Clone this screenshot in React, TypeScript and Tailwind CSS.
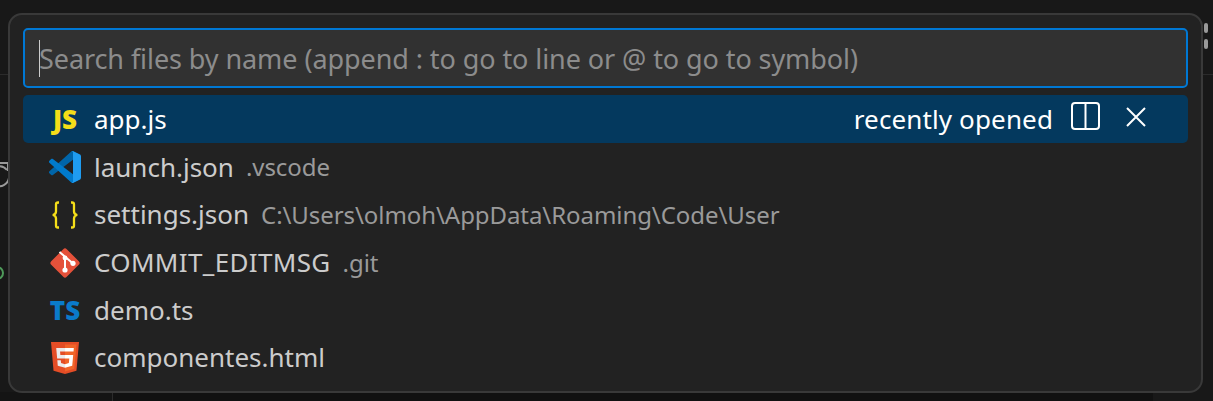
import type { ReactNode } from 'react';

function VsCodeIcon() {
  return (
    <svg viewBox="0 0 100 100" className="w-[32px] h-[32px]">
      <path fill="#0065a9" d="M96.46 10.8L75.86.9C73.47-.25 70.62.24 68.75 2.11L1.3 63.58C-.51 65.23-.51 68.08 1.31 69.73L6.82 74.74C8.3 76.09 10.53 76.19 12.13 74.98L93.36 13.36C96.08 11.29 100 13.23 100 16.65V16.41C100 14 98.62 11.82 96.46 10.8Z" />
      <path fill="#007acc" d="M96.46 89.2L75.86 99.12C73.47 100.26 70.62 99.78 68.75 97.9L1.3 36.42C-.51 34.77-.51 31.92 1.31 30.27L6.82 25.26C8.3 23.91 10.53 23.81 12.13 25.02L93.36 86.64C96.08 88.71 100 86.77 100 83.35V83.59C100 86 98.62 88.18 96.46 89.2Z" />
      <path fill="#1f9cf0" d="M75.86 99.13C73.46 100.27 70.61 99.78 68.74 97.91C71.04 100.21 75 98.58 75 95.3V4.7C75 1.42 71.04-.21 68.74 2.09C70.61.22 73.46-.27 75.86.87L96.46 10.77C98.62 11.81 100 14 100 16.41V83.59C100 86 98.62 88.19 96.46 89.23L75.86 99.13Z" />
    </svg>
  );
}

function Html5Icon() {
  return (
    <svg viewBox="30 0 451 512" className="w-[28px] h-[32px]">
      <path fill="#e44d26" d="M71 460L30 0h451l-41 460-185 52z" />
      <path fill="#f16529" d="M256 472l149-41 35-394H256z" />
      <path fill="#ebebeb" d="M256 208h-75l-5-58h80V94H114l15 171h127zm0 147l-64-17-4-45h-56l7 89 117 32z" />
      <path fill="#ffffff" d="M255.8 265h69l-7 73-62 17v59l116-32 16-173H256zm0-115h137l5-56H256z" />
    </svg>
  );
}

function GitIcon() {
  return (
    <svg viewBox="0 0 32 32" className="w-[32px] h-[32px]">
      <rect x="5" y="5" width="22" height="22" rx="2.5" fill="#e4513a" transform="rotate(45 16 16)" />
      <path d="M10.5 5L24 16.5M16 10V23" fill="none" stroke="#ffffff" strokeWidth="2" />
      <circle cx="16" cy="23" r="2.6" fill="#ffffff" />
      <circle cx="24" cy="16.3" r="2.6" fill="#ffffff" />
      <circle cx="16" cy="11" r="2.4" fill="#ffffff" />
    </svg>
  );
}

function BracesIcon() {
  return (
    <svg viewBox="0 0 28 28" fill="none" stroke="#f5de19" strokeWidth="2.3" className="w-[28px] h-[28px]">
      <path d="M8 1.5H7C5.6 1.5 5 2.3 5 3.6V10.5C5 12.4 4 13.5 1.8 14C4 14.5 5 15.6 5 17.5V24.4C5 25.7 5.6 26.5 7 26.5H8" />
      <path d="M20 1.5H21C22.4 1.5 23 2.3 23 3.6V10.5C23 12.4 24 13.5 26.2 14C24 14.5 23 15.6 23 17.5V24.4C23 25.7 22.4 26.5 21 26.5H20" />
    </svg>
  );
}

interface FileRowProps {
  icon: ReactNode;
  name: string;
  detail?: string;
  selected?: boolean;
  wide?: boolean;
}

function FileRow({ icon, name, detail, selected = false, wide = false }: FileRowProps) {
  return (
    <div className={`flex items-center h-[47.6px] rounded-[5px] pt-[2px] pr-[41px] ${selected ? 'bg-[#04395e] text-white' : 'text-[#cccccc]'}`}>
      <div className="w-[71px] shrink-0 flex items-center justify-center pl-[13px]">{icon}</div>
      <span className={wide ? 'tracking-[0.35px]' : ''}>{name}</span>
      {detail && <span className="ml-[12px] text-[24px] tracking-[-0.07px] text-[#9a9a9a]">{detail}</span>}
      {selected && (
        <div className="ml-auto flex items-center">
          <span className="tracking-[0.13px]">recently opened</span>
          <svg viewBox="0 0 29 28" fill="none" stroke="#ffffff" strokeWidth="2" className="ml-[18px] mb-[7px] w-[29px] h-[28px]">
            <rect x="1" y="1" width="27" height="26" rx="3" />
            <path d="M14.5 1V27" />
          </svg>
          <svg viewBox="0 0 22 22" fill="none" stroke="#ffffff" strokeWidth="2" className="ml-[25px] mb-[5px] w-[22px] h-[22px]">
            <path d="M2 2L20 20M20 2L2 20" />
          </svg>
        </div>
      )}
    </div>
  );
}

export default function App() {
  return (
    <div className="relative w-[1213px] h-[401px] overflow-hidden bg-[#181818] font-['Noto_Sans','Open_Sans',sans-serif] text-[26px]">
      <div className="h-[75px] border-b border-[#2b2b2b]" />
      <svg viewBox="0 0 24 30" fill="none" stroke="#9a9a9a" strokeWidth="2" className="absolute left-[-12px] top-[160px] w-[24px] h-[30px]">
        <path d="M19 10A10 10 0 1 0 21 18" />
        <path d="M12 3H20V11" />
      </svg>
      <div className="absolute left-[-10px] top-[266px] w-[14px] h-[14px] rounded-full border-[2px] border-[#4e9a5a]" />
      <div className="absolute left-[1204px] top-[23px] w-[4px] h-[10px] rounded-[2px] bg-[#9a9a9a]" />
      <div className="absolute left-[1204px] top-[39px] w-[4px] h-[10px] rounded-[2px] bg-[#9a9a9a]" />
      <div className="absolute left-0 bottom-0 w-[113px] h-[9px] border-r border-[#2b2b2b] bg-[#141414]" />
      <div className="absolute left-[113px] bottom-0 w-[1040px] h-[9px] bg-[#111111]" />

      <div className="absolute left-[8px] top-[13px] w-[1195px] h-[380px] rounded-[14px] border-[2px] border-[#393939] bg-[#222222] px-[13px] pt-[13px]">
        <div className="flex items-center h-[60px] rounded-[5px] border-[2px] border-[#0078d4] bg-[#313131] pl-[14px]">
          <span className="w-px h-[37px] bg-[#cccccc]" />
          <span className="-ml-px pt-[2px] text-[27px] text-[#8c8c8c] tracking-[-0.08px] whitespace-nowrap">Search files by name (append : to go to line or @ to go to symbol)</span>
        </div>
        <div className="mt-[7px] flex flex-col">
          <FileRow selected name="app.js" icon={<span className="font-['Open_Sans',sans-serif] font-extrabold text-[#f5de19] text-[26px]">JS</span>} />
          <FileRow name="launch.json" detail=".vscode" icon={<VsCodeIcon />} />
          <FileRow name="settings.json" detail="C:\Users\olmoh\AppData\Roaming\Code\User" icon={<BracesIcon />} />
          <FileRow wide name="COMMIT_EDITMSG" detail=".git" icon={<GitIcon />} />
          <FileRow name="demo.ts" icon={<span className="font-['Open_Sans',sans-serif] font-extrabold text-[#0a7bca] text-[26px]">TS</span>} />
          <FileRow name="componentes.html" icon={<Html5Icon />} />
        </div>
      </div>
    </div>
  );
}
